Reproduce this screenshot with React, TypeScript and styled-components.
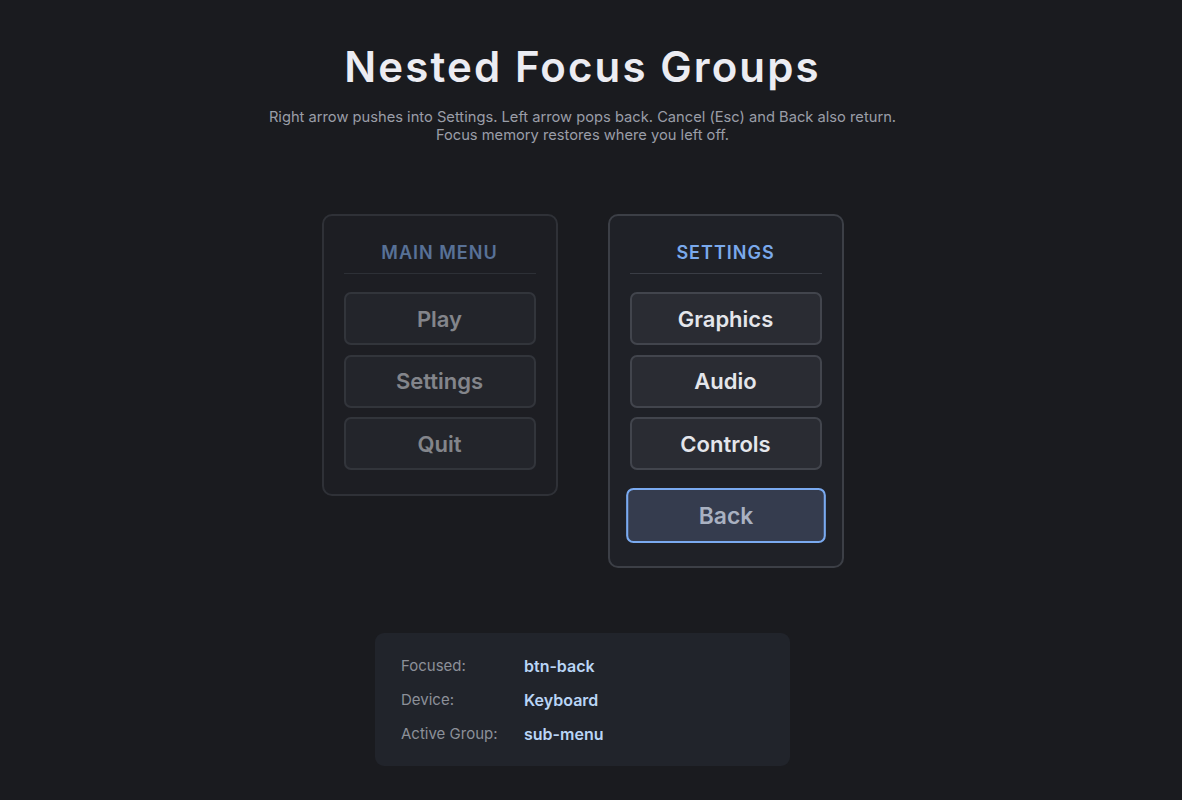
import styled, { createGlobalStyle } from 'styled-components';

const GlobalStyle = createGlobalStyle`
  html, body {
    margin: 0;
    padding: 0;
    background: #1a1b1f;
  }
  body {
    font-family: Inter, "Noto Sans", sans-serif;
    color: #e5e7eb;
  }
`;

const Page = styled.main`
  display: flex;
  flex-direction: column;
  align-items: center;
  padding: 38px 17px 40px 0;
`;

const Title = styled.h1`
  margin: 0;
  font-size: 42px;
  line-height: 58px;
  font-weight: 600;
  letter-spacing: 2.1px;
  color: #ececf2;
`;

const Subtitle = styled.p`
  margin: 12px 0 0;
  font-size: 14.7px;
  line-height: 18px;
  color: #9a9ea8;
  text-align: center;
`;

const Groups = styled.div`
  display: flex;
  align-items: flex-start;
  gap: 50px;
  margin-top: 70px;
`;

const Group = styled.section<{ $active?: boolean }>`
  width: 236px;
  box-sizing: border-box;
  display: flex;
  flex-direction: column;
  padding: 26px 20px 24px;
  border: 2px solid #3c3f46;
  border-radius: 10px;
  background: #1f2127;
  opacity: ${(p) => (p.$active ? 1 : 0.62)};
`;

const GroupTitle = styled.h2<{ $active?: boolean }>`
  margin: 0 0 18px;
  padding-bottom: 9px;
  border-bottom: 1px solid #3a3d45;
  font-size: 18px;
  line-height: 22px;
  font-weight: 600;
  letter-spacing: 1px;
  text-align: center;
  color: ${(p) => (p.$active ? '#7aa9ec' : '#7ea6e0')};
`;

const List = styled.div`
  display: flex;
  flex-direction: column;
  gap: 9.5px;
`;

const MenuButton = styled.button<{ $focused?: boolean; $dim?: boolean }>`
  height: 53px;
  box-sizing: border-box;
  border-radius: 7px;
  font-family: Inter, "Noto Sans", sans-serif;
  font-size: 22px;
  font-weight: 600;
  cursor: pointer;
  border: 2px solid ${(p) => (p.$focused ? '#7aaaf0' : '#42454d')};
  background: ${(p) => (p.$focused ? '#353c4e' : '#2a2c33')};
  color: ${(p) => (p.$focused ? '#a9b1c1' : p.$dim ? '#c4c7cd' : '#e4e6eb')};
  transform: ${(p) => (p.$focused ? 'scale(1.04)' : 'none')};
  margin-top: ${(p) => (p.$focused ? '9px' : '0')};
`;

const Info = styled.div`
  margin-top: 65px;
  width: 415px;
  box-sizing: border-box;
  padding: 24px 26px 23px;
  background: #21242b;
  border-radius: 9px;
  display: grid;
  grid-template-columns: 123px 1fr;
  align-items: center;
  row-gap: 16px;
  font-size: 15px;
  line-height: 18px;
`;

const Label = styled.span`
  color: #8c9099;
`;

const Value = styled.span`
  color: #b9d5f6;
  font-size: 16px;
  font-weight: 600;
`;

const mainItems = ['Play', 'Settings', 'Quit'];
const subItems = ['Graphics', 'Audio', 'Controls'];

const status: [string, string][] = [
  ['Focused:', 'btn-back'],
  ['Device:', 'Keyboard'],
  ['Active Group:', 'sub-menu'],
];

export default function App() {
  return (
    <>
      <GlobalStyle />
      <Page>
        <Title>Nested Focus Groups</Title>
        <Subtitle>
          Right arrow pushes into Settings. Left arrow pops back. Cancel (Esc) and Back also return.
          <br />
          Focus memory restores where you left off.
        </Subtitle>
        <Groups>
          <Group>
            <GroupTitle>MAIN MENU</GroupTitle>
            <List>
              {mainItems.map((item) => (
                <MenuButton key={item} $dim>
                  {item}
                </MenuButton>
              ))}
            </List>
          </Group>
          <Group $active>
            <GroupTitle $active>SETTINGS</GroupTitle>
            <List>
              {subItems.map((item) => (
                <MenuButton key={item}>{item}</MenuButton>
              ))}
              <MenuButton $focused>Back</MenuButton>
            </List>
          </Group>
        </Groups>
        <Info>
          {status.map(([label, value]) => [
            <Label key={label}>{label}</Label>,
            <Value key={value}>{value}</Value>,
          ])}
        </Info>
      </Page>
    </>
  );
}
